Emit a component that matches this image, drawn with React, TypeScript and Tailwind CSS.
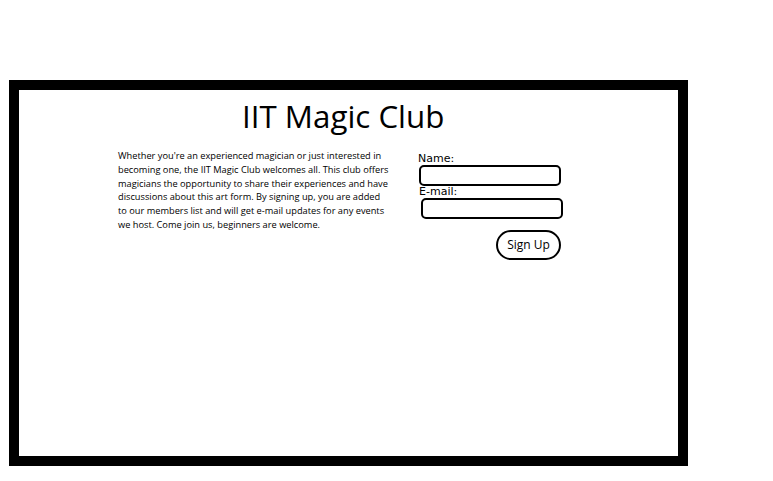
import React from "react";

export default function App() {
  const lines = [
    "Whether you're an experienced magician or just interested in",
    "becoming one, the IIT Magic Club welcomes all. This club offers",
    "magicians the opportunity to share their experiences and have",
    "discussions about this art form. By signing up, you are added",
    "to our members list and will get e-mail updates for any events",
    "we host. Come join us, beginners are welcome.",
  ];
  return (
    <div className="w-[773px] h-[481px] bg-white overflow-hidden pt-[80px] pl-[9px]">
      <div className="w-[679px] h-[386px] border-[10px] border-black bg-white flex flex-col">
        <div
          className="pl-[223px] pt-[6px] h-[52px] text-[31.3px] leading-[40px] text-black whitespace-nowrap"
          style={{ fontFamily: '"Open Sans", sans-serif' }}
        >
          IIT Magic Club
        </div>
        <div className="flex">
          <div
            className="pl-[99px] pt-[7px] w-[399px] text-[9.25px] leading-[13.8px] text-black"
            style={{ fontFamily: '"Open Sans", sans-serif' }}
          >
            {lines.map((l, i) => (
              <div key={i} className="whitespace-nowrap">
                {l}
              </div>
            ))}
          </div>
          <div
            className="flex flex-col pt-[10px]"
            style={{ fontFamily: '"DejaVu Sans", sans-serif' }}
          >
            <div className="text-[11px] leading-[13px] text-black">Name:</div>
            <div className="ml-[1px] w-[142px] h-[21px] border-2 border-black rounded-[5px]" />
            <div className="text-[11px] leading-[12px] pl-[1px] text-black">E-mail:</div>
            <div className="ml-[3px] w-[142px] h-[21px] border-2 border-black rounded-[5px]" />
            <div className="flex justify-end pt-[11px] w-[143px]">
              <div
                className="w-[65px] h-[30px] border-2 border-black rounded-full flex items-center justify-center text-[12px] text-black"
                style={{ fontFamily: '"Open Sans", sans-serif' }}
              >
                Sign Up
              </div>
            </div>
          </div>
        </div>
      </div>
    </div>
  );
}
